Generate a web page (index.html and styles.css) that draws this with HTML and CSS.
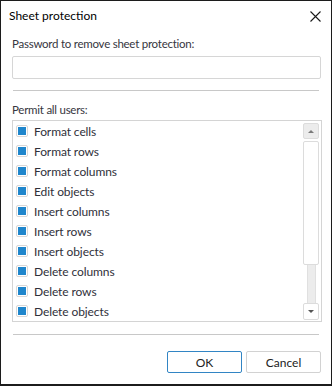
FILE: index.html
```html
<!DOCTYPE html>
<html lang="en">
<head>
    <meta charset="UTF-8">
    <title>Sheet protection</title>
    <link rel="stylesheet" href="styles.css">
</head>
<body>
    <div class="dialog">
        <div class="title-bar">
            <span class="title">Sheet protection</span>
            <svg class="close-icon" width="11" height="11" viewBox="0 0 11 11">
                <path d="M0.5 0.5 L10.5 10.5 M10.5 0.5 L0.5 10.5" stroke="#1a1a1a" stroke-width="1.1" fill="none"/>
            </svg>
        </div>
        <div class="content">
            <div class="field-label">Password to remove sheet protection:</div>
            <input class="password-input" type="password">
            <div class="separator"></div>

            <div class="field-label permit-label">Permit all users:</div>
            <div class="list-box">
                <ul class="list">
                    <li class="list-item"><span class="check"></span>Format cells</li>
                    <li class="list-item"><span class="check"></span>Format rows</li>
                    <li class="list-item"><span class="check"></span>Format columns</li>
                    <li class="list-item"><span class="check"></span>Edit objects</li>
                    <li class="list-item"><span class="check"></span>Insert columns</li>
                    <li class="list-item"><span class="check"></span>Insert rows</li>
                    <li class="list-item"><span class="check"></span>Insert objects</li>
                    <li class="list-item"><span class="check"></span>Delete columns</li>
                    <li class="list-item"><span class="check"></span>Delete rows</li>
                    <li class="list-item"><span class="check"></span>Delete objects</li>
                </ul>
                <div class="scrollbar">
                    <div class="scroll-button scroll-up"><span class="arrow-up"></span></div>
                    <div class="scroll-thumb"></div>
                    <div class="scroll-track"></div>
                    <div class="scroll-button scroll-down"><span class="arrow-down"></span></div>
                </div>
            </div>
            <div class="separator bottom-separator"></div>

            <div class="buttons">
                <button class="dialog-button default-button">OK</button>
                <button class="dialog-button">Cancel</button>
            </div>
        </div>
    </div>
</body>
</html>
```

FILE: styles.css
```css
body {
    margin: 0;
    background: #fff;
    font-family: 'Segoe UI', Lato, 'Noto Sans', sans-serif;
    font-size: 12px;
}

.dialog {
    width: 332px;
    height: 386px;
    box-sizing: border-box;
    border: 1px solid #1c1c1c;
    border-bottom-width: 2px;
    background: #fff;
}

.title-bar {
    height: 29px;
    display: flex;
    align-items: center;
    justify-content: space-between;
    padding: 0 10px 0 8px;
}

.title {
    color: #000;
    font-size: 12px;
}

.close-icon {
    display: block;
    margin-top: 1px;
}

.content {
    padding: 0 10px 0 11px;
}

.field-label {
    margin-top: 6px;
    height: 16px;
    line-height: 16px;
    font-size: 11.5px;
    letter-spacing: -0.25px;
    color: #363640;
}

.password-input {
    display: block;
    box-sizing: border-box;
    width: 309px;
    height: 23px;
    margin-top: 4px;
    border: 1px solid #d6d6d6;
    border-radius: 2px;
    outline: none;
}

.separator {
    height: 1px;
    margin: 11px 2px 0 1px;
    background: #c8c8c8;
}

.permit-label {
    margin-top: 11px;
}

.list-box {
    box-sizing: border-box;
    width: 310px;
    height: 202px;
    margin-top: 2px;
    border: 1px solid #d4d4d4;
    display: flex;
}

.list {
    list-style: none;
    margin: 0;
    padding: 0;
    flex: 1;
}

.list-item {
    height: 20px;
    display: flex;
    align-items: center;
    color: #30303a;
    padding-left: 3px;
    letter-spacing: -0.1px;
}

.check {
    width: 8px;
    height: 8px;
    padding: 1px;
    border: 1px solid #d8d8d8;
    border-radius: 2px;
    background: #1f86cc;
    background-clip: content-box;
    margin-right: 6px;
}

.scrollbar {
    width: 16px;
    margin: 2px 2px 1px 0;
    display: flex;
    flex-direction: column;
}

.scroll-button {
    height: 16px;
    box-sizing: border-box;
    border: 1px solid #dcdcdc;
    border-radius: 2px;
    display: flex;
    align-items: center;
    justify-content: center;
}

.scroll-up {
    background: #ececec;
}

.scroll-down {
    background: #fff;
    height: 17px;
}

.arrow-up {
    width: 0;
    height: 0;
    border-left: 3px solid transparent;
    border-right: 3px solid transparent;
    border-bottom: 3px solid #7a7a7a;
}

.arrow-down {
    width: 0;
    height: 0;
    border-left: 3px solid transparent;
    border-right: 3px solid transparent;
    border-top: 3px solid #555;
}

.scroll-thumb {
    height: 124px;
    margin-top: 2px;
    box-sizing: border-box;
    border: 1px solid #dcdcdc;
    border-radius: 2px;
    background: #fff;
}

.scroll-track {
    flex: 1;
    width: 7px;
    margin: 0 auto;
    background: #ececec;
    border-left: 1px solid #e0e0e0;
    border-right: 1px solid #e0e0e0;
}

.bottom-separator {
    margin-top: 12px;
}

.buttons {
    display: flex;
    justify-content: flex-end;
    gap: 4px;
    margin-top: 16px;
}

.dialog-button {
    width: 75px;
    height: 22px;
    box-sizing: border-box;
    background: #fff;
    border: 1px solid #d2d2d2;
    border-radius: 2px;
    font-family: 'Segoe UI', Lato, 'Noto Sans', sans-serif;
    font-size: 12px;
    color: #222;
    padding: 0;
}

.default-button {
    border-color: #3285c4;
}
```
